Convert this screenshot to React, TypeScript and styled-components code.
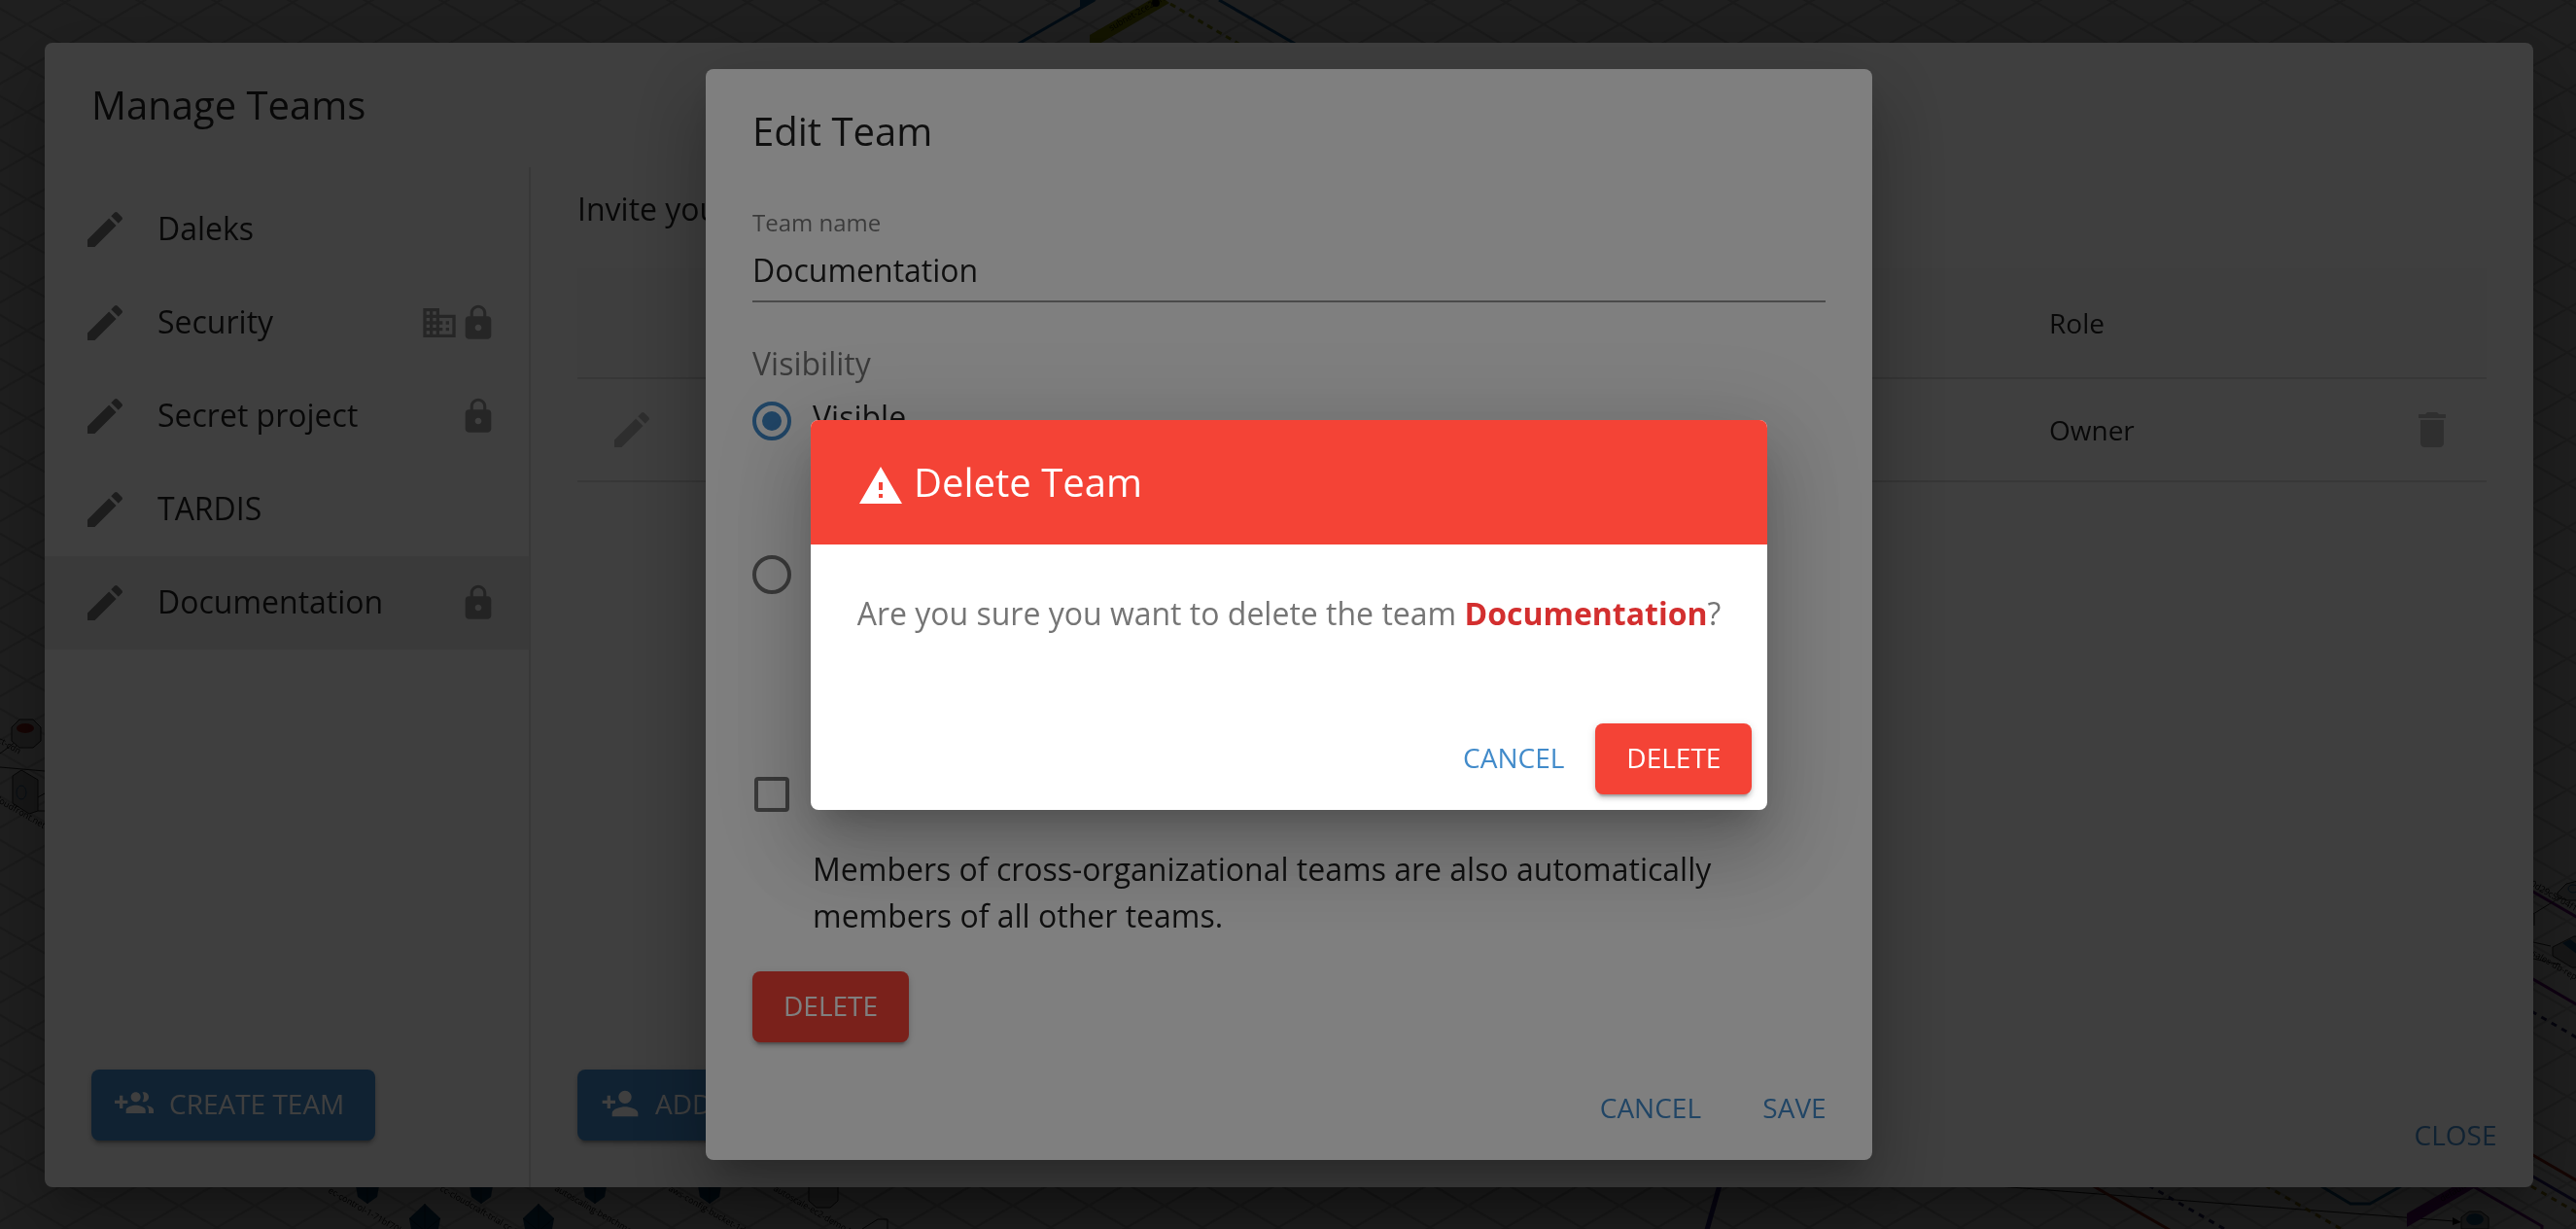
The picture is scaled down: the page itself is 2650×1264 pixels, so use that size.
import React from "react";
import styled, { createGlobalStyle, css } from "styled-components";

const color = {
  primary: "#428bca",
  danger: "#f44336",
  dangerDark: "#d32f2f",
  text: "rgba(0, 0, 0, 0.87)",
  secondary: "rgba(0, 0, 0, 0.54)",
  muted: "rgba(0, 0, 0, 0.4)",
  disabled: "rgba(0, 0, 0, 0.26)",
  divider: "rgba(0, 0, 0, 0.12)",
};

const GlobalStyle = createGlobalStyle`
  *, *::before, *::after { box-sizing: border-box; }
  body {
    margin: 0;
    overflow: hidden;
    background: #fff;
    color: ${color.text};
    font: 400 32px/48px "Open Sans", "Noto Sans", sans-serif;
  }
  button, input { font: inherit; color: inherit; }
  h2, p, ul, fieldset, legend { margin: 0; padding: 0; border: 0; font-weight: 400; }
`;

/* ---------- Icons ---------- */

const paths = {
  edit: "M3 17.25V21h3.75L17.81 9.94l-3.75-3.75L3 17.25zM20.71 7.04c.39-.39.39-1.02 0-1.41l-2.34-2.34c-.39-.39-1.02-.39-1.41 0l-1.83 1.83 3.75 3.75 1.83-1.83z",
  lock: "M18 8h-1V6c0-2.76-2.24-5-5-5S7 3.24 7 6v2H6c-1.1 0-2 .9-2 2v10c0 1.1.9 2 2 2h12c1.1 0 2-.9 2-2V10c0-1.1-.9-2-2-2zm-6 9c-1.1 0-2-.9-2-2s.9-2 2-2 2 .9 2 2-.9 2-2 2zm3.1-9H8.9V6c0-1.71 1.39-3.1 3.1-3.1 1.71 0 3.1 1.39 3.1 3.1v2z",
  domain:
    "M12 7V3H2v18h20V7H12zM6 19H4v-2h2v2zm0-4H4v-2h2v2zm0-4H4V9h2v2zm0-4H4V5h2v2zm4 12H8v-2h2v2zm0-4H8v-2h2v2zm0-4H8V9h2v2zm0-4H8V5h2v2zm10 12h-8v-2h2v-2h-2v-2h2v-2h-2V9h8v10zm-2-8h-2v2h2v-2zm0 4h-2v2h2v-2z",
  groupAdd:
    "M8 10H5V7H3v3H0v2h3v3h2v-3h3v-2zm10 1c1.66 0 2.99-1.34 2.99-3S19.66 5 18 5c-.32 0-.63.05-.91.14.57.81.9 1.79.9 2.86s-.34 2.04-.9 2.86c.28.09.59.14.91.14zm-5 0c1.66 0 2.99-1.34 2.99-3S14.66 5 13 5c-1.66 0-3 1.34-3 3s1.34 3 3 3zm6.62 2.16c.83.73 1.38 1.66 1.38 2.84v2h3v-2c0-1.54-2.37-2.49-4.38-2.84zM13 13c-2 0-6 1-6 3v2h12v-2c0-2-4-3-6-3z",
  personAdd:
    "M15 12c2.21 0 4-1.79 4-4s-1.79-4-4-4-4 1.79-4 4 1.79 4 4 4zm-9-2V7H4v3H1v2h3v3h2v-3h3v-2H6zm9 4c-2.67 0-8 1.34-8 4v2h16v-2c0-2.66-5.33-4-8-4z",
  warning: "M1 21h22L12 2 1 21zm12-3h-2v-2h2v2zm0-4h-2v-4h2v4z",
  trash: "M6 19c0 1.1.9 2 2 2h8c1.1 0 2-.9 2-2V7H6v12zM19 4h-3.5l-1-1h-5l-1 1H5v2h14V4z",
};

const IconSvg = styled.svg<{ $size: number }>`
  flex: none;
  width: ${(p) => p.$size}px;
  height: ${(p) => p.$size}px;
  fill: currentColor;
  vertical-align: middle;
`;

function Icon({ name, size = 48 }: { name: keyof typeof paths; size?: number }) {
  return (
    <IconSvg $size={size} viewBox="0 0 24 24" aria-hidden="true">
      <path d={paths[name]} />
    </IconSvg>
  );
}

/* ---------- Shared dialog parts ---------- */

const Overlay = styled.div`
  position: fixed;
  inset: 0;
  display: flex;
  align-items: center;
  justify-content: center;
  padding-left: 2px;
  background: rgba(0, 0, 0, 0.5);
`;

const Dialog = styled.section<{ $width?: string; $height?: string }>`
  display: flex;
  flex-direction: column;
  width: ${(p) => p.$width ?? "auto"};
  height: ${(p) => p.$height ?? "auto"};
  border-radius: 8px;
  background: #fff;
  overflow: hidden;
  box-shadow:
    0 22px 30px -14px rgba(0, 0, 0, 0.2),
    0 48px 76px 6px rgba(0, 0, 0, 0.14),
    0 18px 92px 16px rgba(0, 0, 0, 0.12);
`;

const DialogTitle = styled.h2<{ $danger?: boolean }>`
  padding: 32px 48px;
  font-size: 40px;
  line-height: 64px;
  ${(p) =>
    p.$danger &&
    css`
      background: ${color.danger};
      color: #fff;
    `}
`;

const Actions = styled.footer`
  display: flex;
  justify-content: flex-end;
  gap: 16px;
  padding: 16px;
`;

const Button = styled.button<{ $tone?: "primary" | "danger" }>`
  display: inline-flex;
  align-items: center;
  justify-content: center;
  min-width: 128px;
  padding: 11px 16px 14px;
  border: 0;
  border-radius: 8px;
  background: none;
  color: ${color.primary};
  font-size: 28px;
  line-height: 48px;
  text-transform: uppercase;
  white-space: nowrap;
  cursor: pointer;
  ${(p) =>
    p.$tone &&
    css`
      padding: 11px 32px 14px;
      background: ${color[p.$tone]};
      color: #fff;
      box-shadow:
        0 6px 2px -4px rgba(0, 0, 0, 0.2),
        0 4px 4px rgba(0, 0, 0, 0.14),
        0 2px 10px rgba(0, 0, 0, 0.12);
    `}
  svg {
    margin: 0 16px 0 -8px;
  }
`;

const IconButton = styled.button`
  display: flex;
  padding: 0;
  border: 0;
  background: none;
  color: ${color.secondary};
  cursor: pointer;
  &:disabled {
    color: ${color.disabled};
    cursor: default;
  }
`;

/* ---------- Manage teams ---------- */

const Columns = styled.div`
  flex: 1;
  display: flex;
`;

const Sidebar = styled.div`
  flex: none;
  display: flex;
  flex-direction: column;
  justify-content: space-between;
  align-items: flex-start;
  width: 500px;
  border-right: 2px solid ${color.divider};
`;

const TeamList = styled.ul`
  width: 100%;
  padding: 16px 0;
  list-style: none;
`;

const TeamItem = styled.li<{ $selected?: boolean }>`
  display: flex;
  align-items: center;
  height: 96px;
  padding: 0 32px 0 38px;
  background: ${(p) => (p.$selected ? "rgba(0, 0, 0, 0.08)" : "none")};
`;

const TeamName = styled.span`
  flex: 1;
  padding: 0 0 2px 30px;
`;

const Badges = styled.span`
  display: flex;
  color: ${color.muted};
`;

const SidebarFooter = styled.div`
  padding: 48px;
`;

const Members = styled.div`
  flex: 1;
  display: flex;
  flex-direction: column;
`;

const MembersBody = styled.div`
  flex: 1;
  padding: 19px 48px 0;
`;

const Table = styled.table`
  width: 100%;
  margin-top: 37px;
  border-collapse: collapse;
  table-layout: fixed;
  font-size: 28px;
  line-height: 40px;
  text-align: left;
  thead tr {
    height: 113px;
    background: rgba(0, 0, 0, 0.02);
  }
  tbody tr {
    height: 106px;
  }
  tr {
    border-bottom: 2px solid ${color.divider};
  }
  th,
  td {
    padding: 0 32px;
    font-weight: 400;
  }
`;

const MembersFooter = styled.footer`
  display: flex;
  align-items: flex-end;
  justify-content: space-between;
  padding: 0 16px 16px 48px;
`;

const AddMember = styled(Button)`
  margin-bottom: 32px;
`;

const teams: { name: string; shared?: boolean; locked?: boolean }[] = [
  { name: "Daleks" },
  { name: "Security", shared: true, locked: true },
  { name: "Secret project", locked: true },
  { name: "TARDIS" },
  { name: "Documentation", locked: true },
];

function ManageTeams() {
  return (
    <Dialog $width="min(2560px, 100% - 64px)" $height="calc(100vh - 87px)" aria-labelledby="manage-title">
      <DialogTitle id="manage-title">Manage Teams</DialogTitle>
      <Columns>
        <Sidebar>
          <TeamList>
            {teams.map((team) => (
              <TeamItem key={team.name} $selected={team.name === "Documentation"}>
                <IconButton aria-label={`Edit ${team.name}`}>
                  <Icon name="edit" />
                </IconButton>
                <TeamName>{team.name}</TeamName>
                <Badges>
                  {team.shared && <Icon name="domain" size={40} />}
                  {team.locked && <Icon name="lock" size={40} />}
                </Badges>
              </TeamItem>
            ))}
          </TeamList>
          <SidebarFooter>
            <Button $tone="primary">
              <Icon name="groupAdd" size={40} />
              Create team
            </Button>
          </SidebarFooter>
        </Sidebar>
        <Members>
          <MembersBody>
            <p>Invite your colleagues to this team</p>
            <Table>
              <colgroup>
                <col style={{ width: 112 }} />
                <col />
                <col />
                <col style={{ width: 370 }} />
                <col style={{ width: 112 }} />
              </colgroup>
              <thead>
                <tr>
                  <th />
                  <th>Name</th>
                  <th>Email</th>
                  <th>Role</th>
                  <th />
                </tr>
              </thead>
              <tbody>
                <tr>
                  <td>
                    <IconButton disabled aria-label="Edit member">
                      <Icon name="edit" />
                    </IconButton>
                  </td>
                  <td />
                  <td />
                  <td>Owner</td>
                  <td>
                    <IconButton disabled aria-label="Remove member">
                      <Icon name="trash" />
                    </IconButton>
                  </td>
                </tr>
              </tbody>
            </Table>
          </MembersBody>
          <MembersFooter>
            <AddMember $tone="primary">
              <Icon name="personAdd" size={40} />
              Add member
            </AddMember>
            <Button>Close</Button>
          </MembersFooter>
        </Members>
      </Columns>
    </Dialog>
  );
}

/* ---------- Edit team ---------- */

const Form = styled.form`
  padding: 16px 48px;
`;

const FieldLabel = styled.label`
  display: block;
  color: ${color.secondary};
  font-size: 24px;
  line-height: 28px;
`;

const TextField = styled.input`
  display: block;
  width: 100%;
  height: 68px;
  padding: 15px 0 13px;
  border: 0;
  border-bottom: 2px solid rgba(0, 0, 0, 0.42);
  background: none;
  outline: 0;
`;

const Options = styled.fieldset`
  display: flex;
  flex-direction: column;
  gap: 29px;
  margin: 39px 0 49px;
  legend {
    margin-bottom: 7px;
    color: ${color.secondary};
  }
`;

const OptionLabel = styled.label`
  display: flex;
  align-items: center;
  height: 56px;
  span {
    align-self: flex-start;
  }
`;

const Radio = styled.input`
  appearance: none;
  display: grid;
  place-items: center;
  width: 40px;
  height: 40px;
  margin: 0 22px 0 0;
  border: 4px solid ${color.secondary};
  border-radius: 50%;
  &:checked {
    border-color: ${color.primary};
  }
  &:checked::before {
    content: "";
    width: 20px;
    height: 20px;
    border-radius: 50%;
    background: ${color.primary};
  }
`;

const Checkbox = styled.input`
  appearance: none;
  width: 36px;
  height: 36px;
  margin: 0 24px 0 2px;
  border: 4px solid ${color.secondary};
  border-radius: 4px;
`;

const Help = styled.p`
  margin-top: 25px;
  padding-left: 62px;
`;

const DeleteRow = styled.div`
  margin-top: 33px;
`;

function EditTeam() {
  return (
    <Dialog $width="1200px" aria-labelledby="edit-title">
      <DialogTitle id="edit-title">Edit Team</DialogTitle>
      <Form>
        <FieldLabel htmlFor="team-name">Team name</FieldLabel>
        <TextField id="team-name" type="text" defaultValue="Documentation" />
        <Options>
          <legend>Visibility</legend>
          <div>
            <OptionLabel>
              <Radio type="radio" name="visibility" defaultChecked />
              <span>Visible</span>
            </OptionLabel>
            <Help>The team can be seen by all members.</Help>
          </div>
          <div>
            <OptionLabel>
              <Radio type="radio" name="visibility" />
              <span>Secret</span>
            </OptionLabel>
            <Help>
              The team can only be seen by its members
              <br />
              and by organization owners.
            </Help>
          </div>
        </Options>
        <OptionLabel>
          <Checkbox type="checkbox" />
          <span>Cross-organizational</span>
        </OptionLabel>
        <Help>Members of cross-organizational teams are also automatically members of all other teams.</Help>
        <DeleteRow>
          <Button type="button" $tone="danger">
            Delete
          </Button>
        </DeleteRow>
      </Form>
      <Actions>
        <Button>Cancel</Button>
        <Button>Save</Button>
      </Actions>
    </Dialog>
  );
}

/* ---------- Delete confirmation ---------- */

const Message = styled.p`
  padding: 47px 48px 73px;
  color: #757575;
  strong {
    color: ${color.dangerDark};
    font-weight: 700;
  }
`;

function DeleteTeam() {
  return (
    <Dialog role="alertdialog" aria-labelledby="delete-title">
      <DialogTitle id="delete-title" $danger>
        <Icon name="warning" /> Delete Team
      </DialogTitle>
      <Message>
        Are you sure you want to delete the team <strong>Documentation</strong>?
      </Message>
      <Actions>
        <Button>Cancel</Button>
        <Button $tone="danger">Delete</Button>
      </Actions>
    </Dialog>
  );
}

/* ---------- Diagram behind the dialogs ---------- */

const Diagram = styled.svg`
  position: fixed;
  inset: 0;
  width: 100%;
  height: 100%;
  font-size: 9px;
  fill: none;
  stroke-width: 3px;
  text {
    fill: #111;
    stroke: none;
  }
`;

function IsoText({ x, y, up, children }: { x: number; y: number; up?: boolean; children: string }) {
  return <text transform={`translate(${x} ${y}) rotate(${up ? -30 : 30})`}>{children}</text>;
}

function Crystal({ x, y }: { x: number; y: number }) {
  return (
    <g transform={`translate(${x} ${y})`}>
      <path d="M0 0l16 15-6 34-10 7-10-7-6-34z" fill="#14507f" />
      <path d="M0 0v56M-16 15L0 28l16-13" stroke="#0a2c48" strokeWidth={1} />
    </g>
  );
}

function Background() {
  return (
    <Diagram viewBox="0 0 2650 1264" preserveAspectRatio="xMidYMid slice" aria-hidden="true">
      <defs>
        <pattern id="iso" x="28" y="25" width="78" height="45" patternUnits="userSpaceOnUse">
          <path d="M0 0L78 45M0 45L78 0" stroke="#dcdcdc" strokeWidth={2} />
        </pattern>
      </defs>
      <rect width="2650" height="1264" fill="url(#iso)" />

      <path d="M1111 0h17l-17 8z" fill="#1667a8" />
      <path d="M1126 0L1046 46M1254 0l80 46" stroke="#1667a8" />
      <path d="M1121 36l62-36h16l4 3-72 42h-10z" fill="#a3ab00" />
      <path d="M1204 4l72 42" stroke="#a3ab00" strokeDasharray="6 5" />
      <circle cx="1189" cy="3" r="4" fill="#111" />
      <IsoText x={1143} y={32} up>subnet-2ce25192</IsoText>

      <g stroke="#333" strokeWidth={1}>
        <path d="M0 789l46 4M0 775l16-12M39 820l7-4M39 834h7" />
        <path d="M12 748l8-8h14l8 8v14l-8 7H20l-8-7z" fill="#ccc" />
        <path d="M13 798l9-6 17 10v32l-9 3-17-11z" fill="#bbb" />
      </g>
      <ellipse cx="26" cy="749" rx="9" ry="5" fill="#b3261e" />
      <ellipse cx="22" cy="815" rx="5" ry="7" stroke="#2d6da3" strokeWidth={1} />
      <IsoText x={-22} y={752}>project-cdn</IsoText>
      <IsoText x={-32} y={808}>assets.cloudfront.net</IsoText>

      {[378, 495, 612, 730].map((x) => (
        <Crystal key={x} x={x} y={1182} />
      ))}
      <Crystal x={437} y={1238} />
      <Crystal x={554} y={1238} />
      <path d="M832 1215h30v20l-8 7h-14l-8-7z" fill="#ddd" stroke="#333" strokeWidth={1} />
      <path d="M887 1264l16-10h10v10" stroke="#333" strokeWidth={1} />
      <IsoText x={337} y={1226}>ec-control-1-71bf70b08ce</IsoText>
      <IsoText x={452} y={1224}>cc-cloudcraft-trial</IsoText>
      <IsoText x={570} y={1224}>autoscaling-benchmark-1gb6d5</IsoText>
      <IsoText x={687} y={1224}>aws-config-bucket-1da9</IsoText>
      <IsoText x={795} y={1224}>autoscale-ec2-demo (Email)</IsoText>
      <IsoText x={517} y={1262}>cc-tutorial</IsoText>

      <path d="M1769 1219l-13 46" stroke="#3a2c9a" strokeWidth={5} />
      <path d="M2055 1220l470 36" stroke="#222" strokeWidth={1} />
      <path d="M2523 1252l9 5-9 3z" fill="#111" />
      <path d="M2152 1219l80 46M2604 1187l50 29" stroke="#b3301c" />
      <path d="M2210 1219l80 46M2604 1040l50 29" stroke="#2b2870" strokeDasharray="6 6" />
      <path d="M2330 1219l80 46M2604 1220l50 29" stroke="#a08400" strokeDasharray="6 6" />
      <path d="M2388 1220l30 18h20l32-18" stroke="#12689e" />
      <path d="M2476 1248l50-29h24l-74 43z" fill="#7b1292" />
      <path d="M2544 1220l71 41v4M2604 916l50 29M2604 1006l50 29" stroke="#7b1292" />
      <path d="M2604 1209l50 29" stroke="#3a2c9a" />
      <path d="M2532 1264v-12l8-6h12l8 6v12z" fill="#bbb" stroke="#333" strokeWidth={1} />
      <ellipse cx="2546" cy="1254" rx="9" ry="6" fill="#1d6298" />
      <IsoText x={2512} y={1236} up>default</IsoText>

      <g stroke="#333" strokeWidth={1}>
        <path d="M2652 906l-12 3-9 9v5l10 3h11z" fill="#ccc" />
        <path d="M2626 974l22-11h4v32h-6l-20-12z" fill="#bbb" />
        <path d="M2606 940l26-16M2606 969l18 4M2606 986l28 6M2607 940v12" />
      </g>
      <path d="M2636 970l8-4 8 6v10z" fill="#1d6298" />
      <ellipse cx="2647" cy="914" rx="5" ry="4" stroke="#1d6298" strokeWidth={1} />
      <IsoText x={2598} y={908}>i-0d29c5704f1df1</IsoText>
      <IsoText x={2604} y={982}>sales-db-replica</IsoText>
    </Diagram>
  );
}

export default function App() {
  return (
    <>
      <GlobalStyle />
      <Background />
      <Overlay>
        <ManageTeams />
      </Overlay>
      <Overlay>
        <EditTeam />
      </Overlay>
      <Overlay>
        <DeleteTeam />
      </Overlay>
    </>
  );
}
